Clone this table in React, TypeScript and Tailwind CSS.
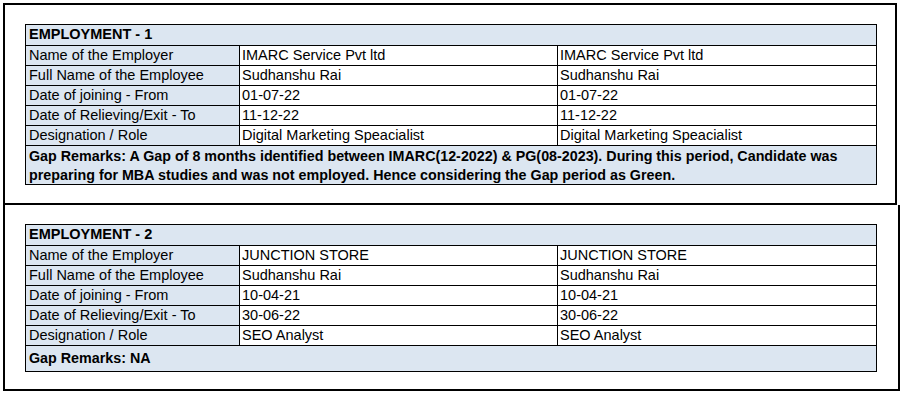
import React from 'react';

interface EmploymentRow {
  label: string;
  value: string;
}

interface Employment {
  title: string;
  rows: EmploymentRow[];
  remarks: React.ReactNode;
  remarksClass: string;
}

const EMPLOYMENTS: Employment[] = [
  {
    title: 'EMPLOYMENT - 1',
    rows: [
      { label: 'Name of the Employer', value: 'IMARC Service Pvt ltd' },
      { label: 'Full Name of the Employee', value: 'Sudhanshu Rai' },
      { label: 'Date of joining - From', value: '01-07-22' },
      { label: 'Date of Relieving/Exit - To', value: '11-12-22' },
      { label: 'Designation / Role', value: 'Digital Marketing Speacialist' },
    ],
    remarks: (
      <>
        Gap Remarks: A Gap of 8 months identified between IMARC(12-2022) &amp;
        PG(08-2023). During this period, Candidate was
        <br />
        preparing for MBA studies and was not employed. Hence considering the
        Gap period as Green.
      </>
    ),
    remarksClass: 'h-[39px] pt-[1px]',
  },
  {
    title: 'EMPLOYMENT - 2',
    rows: [
      { label: 'Name of the Employer', value: 'JUNCTION STORE' },
      { label: 'Full Name of the Employee', value: 'Sudhanshu Rai' },
      { label: 'Date of joining - From', value: '10-04-21' },
      { label: 'Date of Relieving/Exit - To', value: '30-06-22' },
      { label: 'Designation / Role', value: 'SEO Analyst' },
    ],
    remarks: <>Gap Remarks: NA</>,
    remarksClass: 'h-[26px] pt-[3px]',
  },
];

const EmploymentTable: React.FC<{ data: Employment }> = ({ data }) => (
  <div className="w-[852px] border border-black text-[14.5px] leading-[19px] text-black">
    {/* Header */}
    <div className="h-[20px] bg-[#dce6f1] px-[3px] font-bold">{data.title}</div>

    {/* Rows: label | value | value */}
    {data.rows.map(row => (
      <div
        key={row.label}
        className="grid h-[20px] grid-cols-[213px_318px_1fr] border-t border-black"
      >
        <div className="bg-[#dce6f1] px-[3px]">{row.label}</div>
        <div className="border-l border-black bg-white px-[2px]">{row.value}</div>
        <div className="border-l border-black bg-white px-[2px]">{row.value}</div>
      </div>
    ))}

    {/* Remarks */}
    <div
      className={`${data.remarksClass} border-t border-black bg-[#dce6f1] px-[3px] text-[14.3px] font-bold`}
    >
      {data.remarks}
    </div>
  </div>
);

export default function App() {
  return (
    <div className="h-[397px] w-[903px] bg-white pl-[3px] pt-[3px] font-['Liberation_Sans',Arial,sans-serif]">
      <div className="h-[202px] w-[894px] border-2 border-black pl-[20px] pt-[19px]">
        <EmploymentTable data={EMPLOYMENTS[0]} />
      </div>
      <div className="h-[186px] w-[897px] border-2 border-t-0 border-black pl-[20px] pt-[19px]">
        <EmploymentTable data={EMPLOYMENTS[1]} />
      </div>
    </div>
  );
}
